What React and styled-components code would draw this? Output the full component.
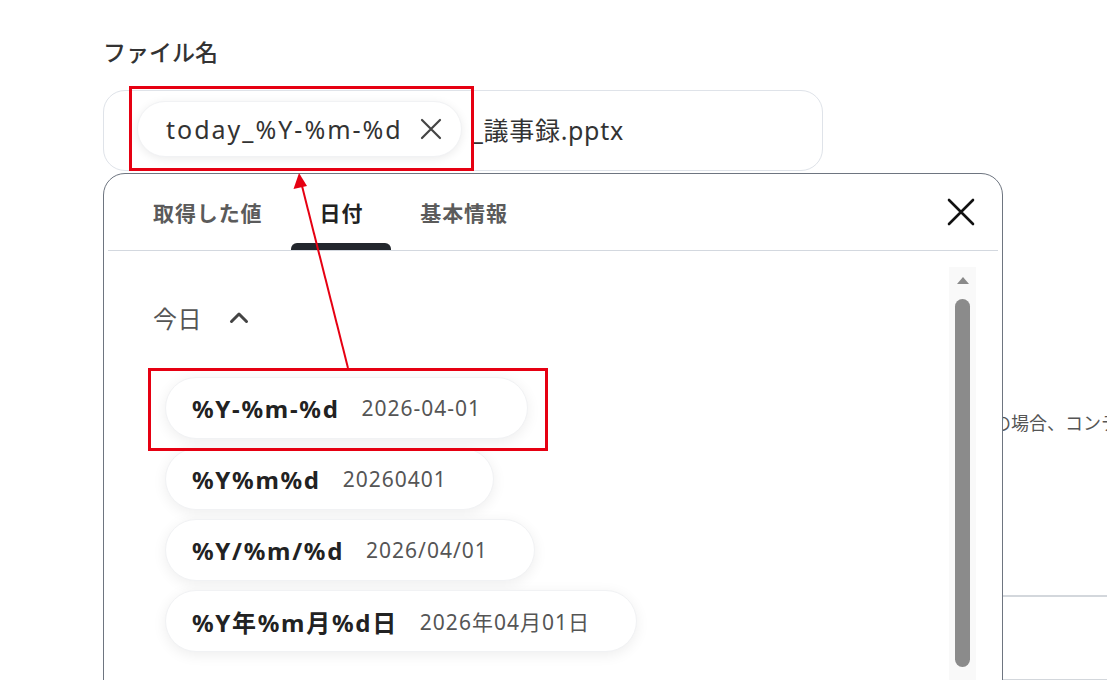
import React from 'react';
import styled, { createGlobalStyle } from 'styled-components';

const Global = createGlobalStyle`
  html, body {
    margin: 0;
    padding: 0;
    background: #fff;
    overflow: hidden;
    height: 680px;
  }
  body {
    font-family: "Noto Sans", "Noto Sans CJK JP", sans-serif;
    color: #333;
  }
`;

const Page = styled.div`
  position: relative;
  width: 1107px;
  height: 680px;
  overflow: hidden;
`;

const Form = styled.div`
  padding: 34px 0 0 103px;
  display: flex;
  flex-direction: column;
`;

const Label = styled.div`
  font-size: 23px;
  font-weight: 500;
  color: #333;
  line-height: 36px;
  margin-bottom: 20px;
`;

const Field = styled.div`
  position: relative;
  width: 720px;
`;

const InputBox = styled.div`
  height: 81px;
  box-sizing: border-box;
  border: 1px solid #dfe3e9;
  border-radius: 22px;
  display: flex;
  align-items: center;
  padding: 0 0 4px 33px;
  gap: 10px;
`;

const TokenChip = styled.span`
  display: inline-flex;
  align-items: center;
  height: 56px;
  box-sizing: border-box;
  padding: 0 19px 0 28px;
  border-radius: 28px;
  background: #fff;
  border: 1px solid #f1f2f4;
  box-shadow: 0 2px 10px rgba(0, 0, 0, 0.08);
  font-size: 25px;
  letter-spacing: 2px;
  color: #333;
  gap: 17px;
`;

const PlainText = styled.span`
  font-size: 25px;
  letter-spacing: 0.7px;
  color: #333;
`;

const Below = styled.div`
  display: grid;
  grid-template-columns: 890px 1fr;
  margin-top: 240px;
  width: 1100px;
`;

const Help = styled.div`
  grid-column: 2;
  font-size: 18px;
  color: #555;
  white-space: nowrap;
  line-height: 24px;
`;

const Table = styled.div`
  margin-top: 160px;
  width: 1020px;
  height: 82px;
  border-top: 2px solid #d3d7dc;
  border-bottom: 2px solid #d3d7dc;
`;

const Dropdown = styled.div`
  position: absolute;
  left: 0;
  top: calc(100% + 2px);
  width: 900px;
  height: 560px;
  box-sizing: border-box;
  background: #fff;
  border: 1px solid #6e7580;
  border-radius: 22px 22px 0 0;
  display: flex;
  flex-direction: column;
`;

const TabBar = styled.div`
  display: flex;
  align-items: stretch;
  height: 76px;
  margin: 0 4px;
  padding-left: 16px;
  border-bottom: 1px solid #d3d8df;
`;

const Tab = styled.div`
  position: relative;
  padding: 0 28px 0 29px;
  display: flex;
  align-items: center;
  font-size: 21px;
  font-weight: 700;
  letter-spacing: 0.9px;
  color: ${p => (p.$active ? '#222' : '#5b5b5b')};
  &::after {
    content: '';
    display: ${p => (p.$active ? 'block' : 'none')};
    position: absolute;
    left: 0;
    right: 0;
    bottom: 0;
    height: 7px;
    background: #23272d;
    border-radius: 6px 6px 0 0;
  }
`;

const CloseBtn = styled.button`
  margin-left: auto;
  margin-right: 22px;
  align-self: center;
  border: 0;
  background: none;
  padding: 0;
  width: 30px;
  height: 30px;
  display: flex;
  align-items: center;
  justify-content: center;
`;

const Body = styled.div`
  flex: 1;
  display: flex;
  padding-top: 16px;
`;

const List = styled.div`
  flex: 1;
  padding: 30px 0 0 49px;
  display: flex;
  flex-direction: column;
  align-items: flex-start;
`;

const SectionHead = styled.div`
  display: flex;
  align-items: center;
  gap: 27px;
  font-size: 24px;
  letter-spacing: 0.5px;
  color: #555;
  height: 40px;
  margin-bottom: 40px;
`;

const Options = styled.div`
  display: flex;
  flex-direction: column;
  align-items: flex-start;
  gap: 9px;
  padding-left: 12px;
`;

const Option = styled.div`
  display: inline-flex;
  align-items: center;
  height: 62px;
  box-sizing: border-box;
  padding: 0 46px 0 26px;
  gap: 22px;
  border-radius: 31px;
  background: #fff;
  border: 1px solid #f1f2f4;
  box-shadow: 0 3px 14px rgba(0, 0, 0, 0.07);
`;

const Fmt = styled.span`
  font-size: 24px;
  font-weight: 700;
  letter-spacing: 1.7px;
  color: #222;
`;

const Val = styled.span`
  font-size: 21px;
  letter-spacing: 1px;
  color: #555;
`;

const Scroll = styled.div`
  width: 27px;
  margin-right: 26px;
  background: #f9f9f9;
  display: flex;
  flex-direction: column;
  align-items: center;
  padding-top: 10px;
`;

const Arrow = styled.div`
  width: 0;
  height: 0;
  border-left: 6px solid transparent;
  border-right: 6px solid transparent;
  border-bottom: 7px solid #8a8a8a;
`;

const Thumb = styled.div`
  margin-top: 15px;
  width: 15px;
  height: 368px;
  border-radius: 8px;
  background: #8b8b8b;
`;

const Overlay = styled.svg`
  position: absolute;
  left: 0;
  top: 0;
  pointer-events: none;
`;

const options = [
  ['%Y-%m-%d', '2026-04-01'],
  ['%Y%m%d', '20260401'],
  ['%Y/%m/%d', '2026/04/01'],
  ['%Y年%m月%d日', '2026年04月01日'],
];

export default function App() {
  return (
    <Page>
      <Global />
      <Form>
        <Label>ファイル名</Label>
        <Field>
          <InputBox>
            <TokenChip>
              today_%Y-%m-%d
              <svg width="22" height="22" viewBox="0 0 22 22">
                <path d="M2 2L20 20M20 2L2 20" stroke="#444" strokeWidth="2.2" strokeLinecap="round" />
              </svg>
            </TokenChip>
            <PlainText>_議事録.pptx</PlainText>
          </InputBox>
          <Dropdown>
            <TabBar>
              <Tab>取得した値</Tab>
              <Tab $active>日付</Tab>
              <Tab>基本情報</Tab>
              <CloseBtn aria-label="close">
                <svg width="28" height="28" viewBox="0 0 28 28">
                  <path d="M2 2L26 26M26 2L2 26" stroke="#111" strokeWidth="2.6" strokeLinecap="round" />
                </svg>
              </CloseBtn>
            </TabBar>
            <Body>
              <List>
                <SectionHead>
                  今日
                  <svg width="20" height="14" viewBox="0 0 20 14">
                    <path d="M2.5 11.5L10 4L17.5 11.5" stroke="#444" strokeWidth="3" fill="none" strokeLinecap="round" strokeLinejoin="round" />
                  </svg>
                </SectionHead>
                <Options>
                  {options.map(([f, v]) => (
                    <Option key={f}>
                      <Fmt>{f}</Fmt>
                      <Val>{v}</Val>
                    </Option>
                  ))}
                </Options>
              </List>
              <Scroll>
                <Arrow />
                <Thumb />
              </Scroll>
            </Body>
          </Dropdown>
        </Field>
        <Below>
          <Help>の場合、コンテンツが上書きされます</Help>
        </Below>
        <Table />
      </Form>
      <Overlay width="1107" height="680">
        <rect x="130.5" y="87.5" width="342" height="82" fill="none" stroke="#e60012" strokeWidth="3" />
        <rect x="149.5" y="369.5" width="397" height="80" fill="none" stroke="#e60012" strokeWidth="3" />
        <line x1="348" y1="368" x2="302" y2="186" stroke="#e60012" strokeWidth="2" />
        <polygon points="299,173 293.5,189 307,186" fill="#e60012" />
      </Overlay>
    </Page>
  );
}
